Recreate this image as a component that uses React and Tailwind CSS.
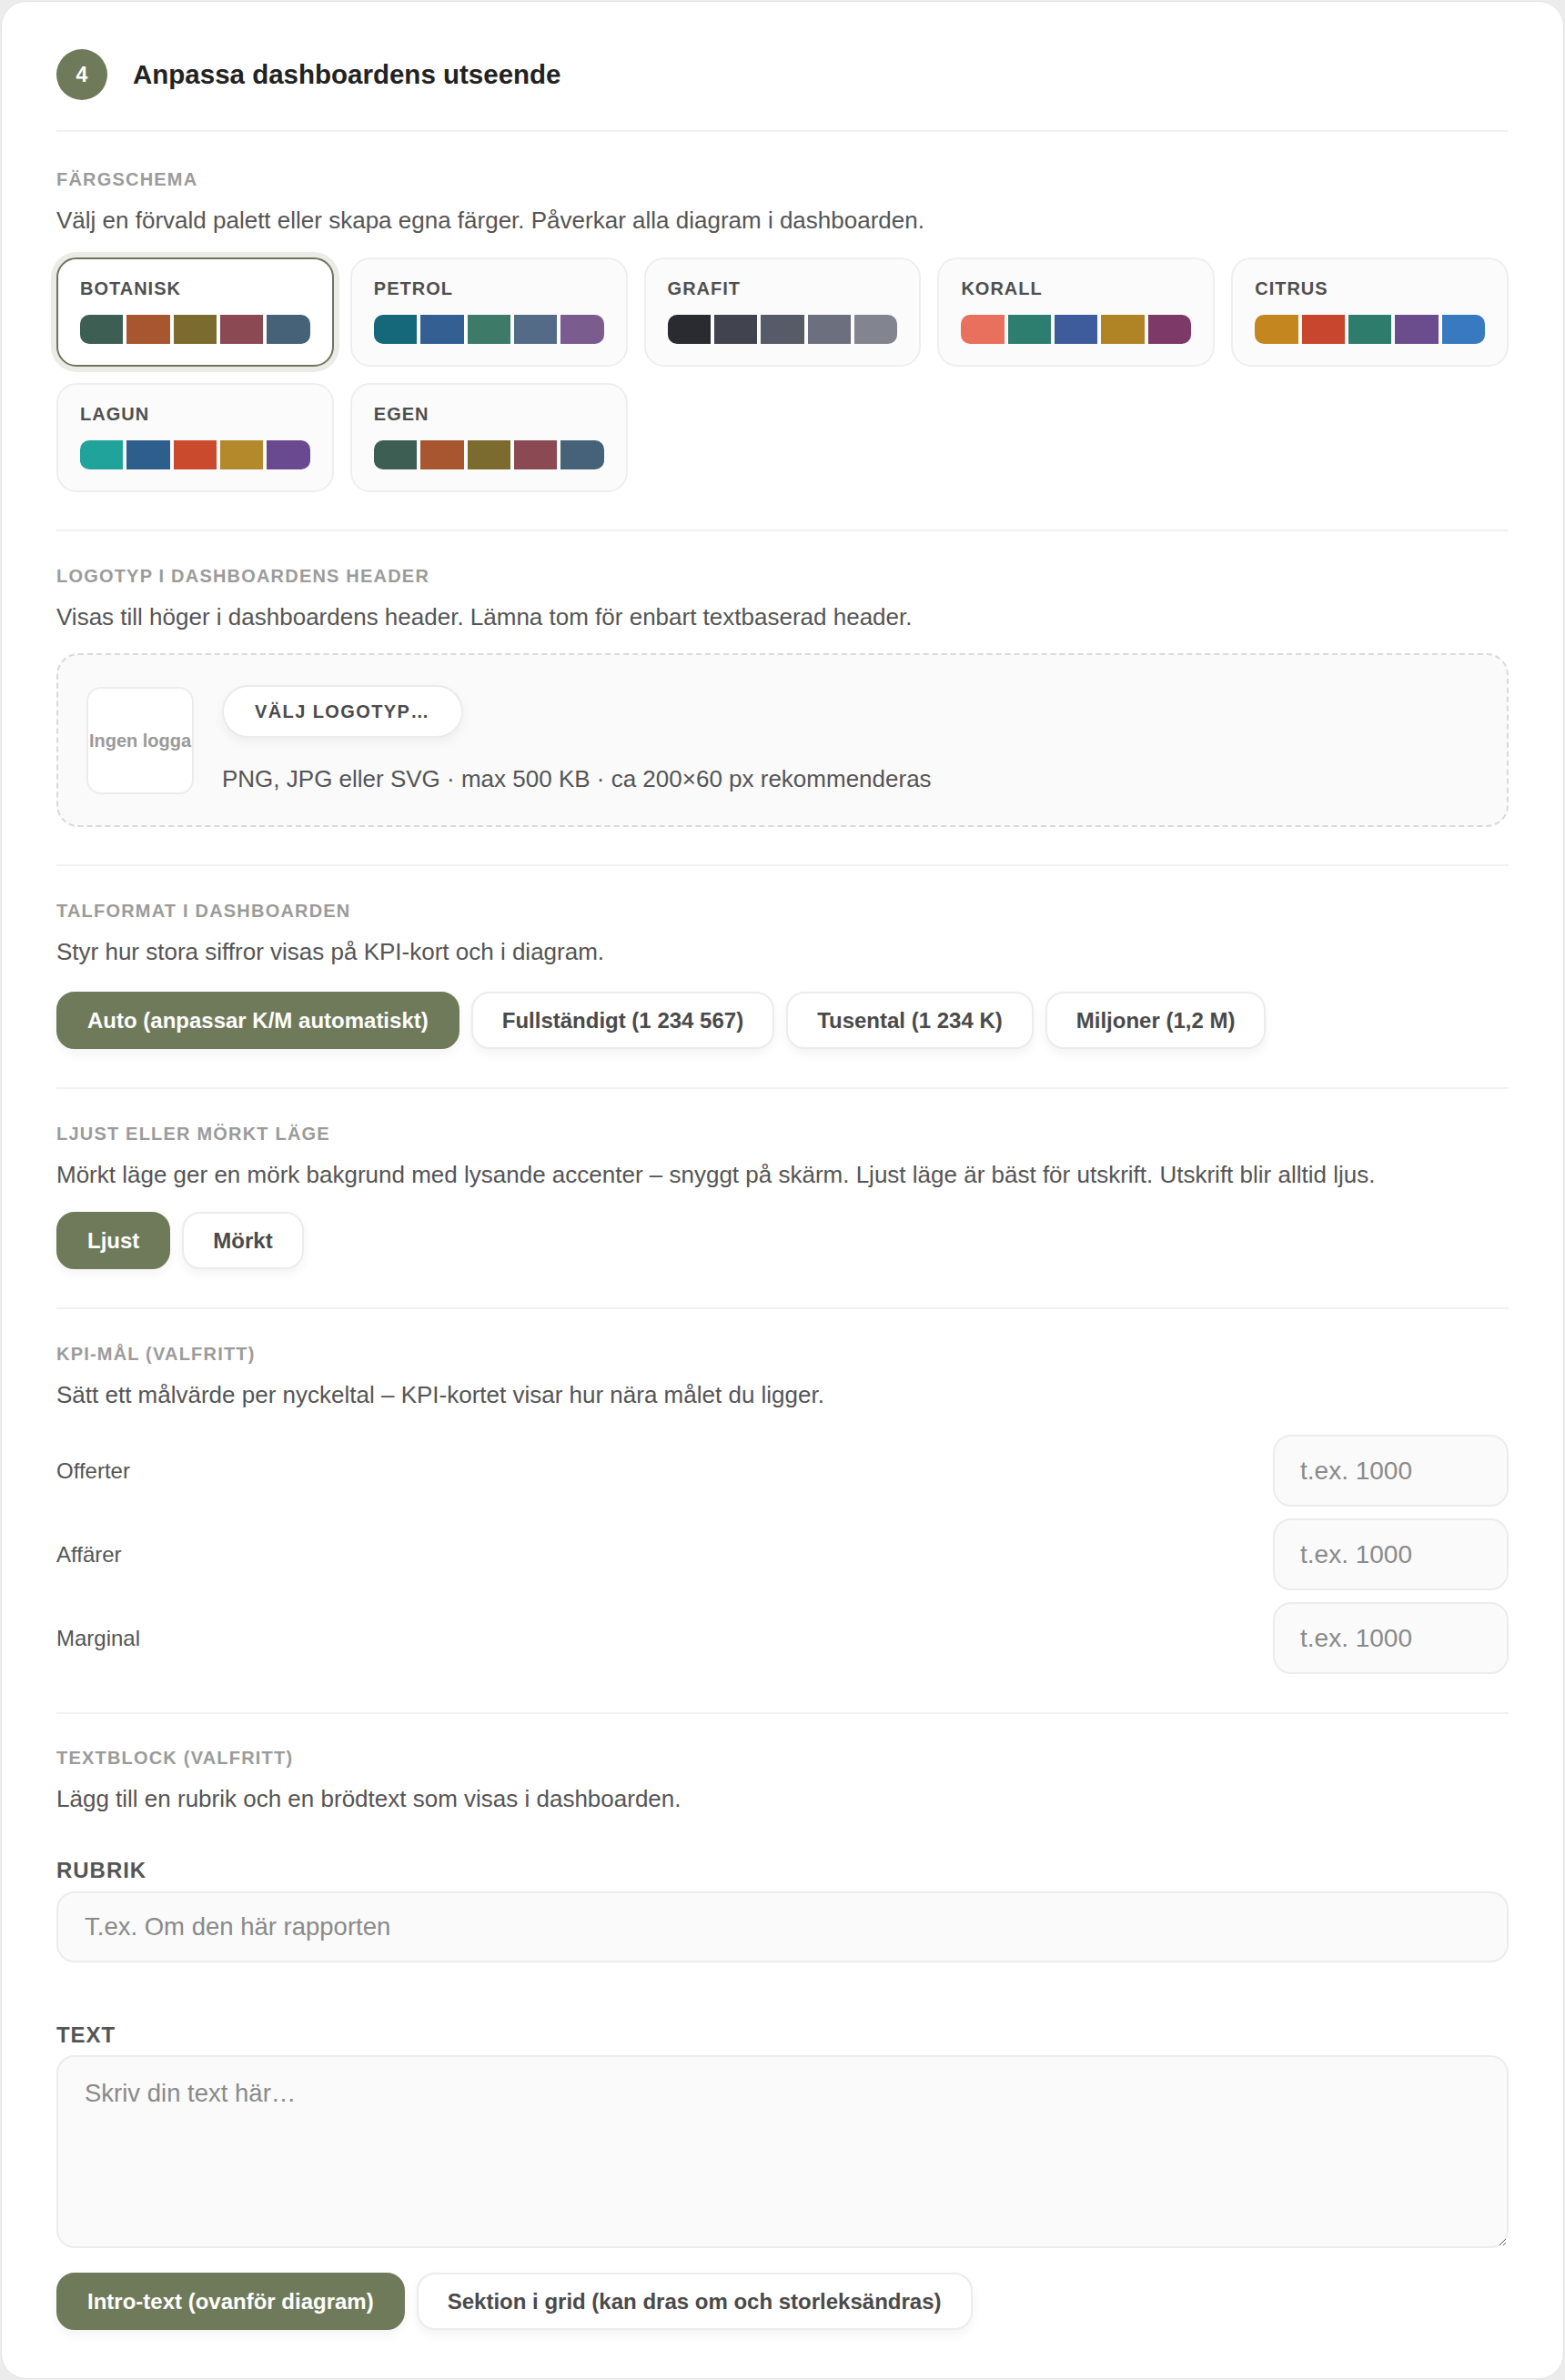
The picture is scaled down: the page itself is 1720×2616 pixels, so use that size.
import React, { useState } from "react";

const palettes = [
  { key: "botanisk", name: "BOTANISK", colors: ["#3d5e52", "#a85630", "#7b6b2e", "#8b4a53", "#466278"] },
  { key: "petrol", name: "PETROL", colors: ["#14687a", "#335f93", "#3e7a68", "#546b87", "#7b5c8e"] },
  { key: "grafit", name: "GRAFIT", colors: ["#2a2b30", "#41434e", "#575a67", "#6c6f7d", "#82858f"] },
  { key: "korall", name: "KORALL", colors: ["#e8705c", "#2d7e6e", "#3e5b9b", "#b08424", "#7d3a69"] },
  { key: "citrus", name: "CITRUS", colors: ["#c4861f", "#c9462e", "#2e7c6c", "#6b4c8c", "#377abf"] },
  { key: "lagun", name: "LAGUN", colors: ["#1fa39a", "#2e5f8c", "#c94a2d", "#b3892b", "#69498f"] },
  { key: "egen", name: "EGEN", colors: ["#3d5e52", "#a85630", "#7b6b2e", "#8b4a53", "#466278"] },
];

const numberFormats = [
  { key: "auto", label: "Auto (anpassar K/M automatiskt)" },
  { key: "full", label: "Fullständigt (1 234 567)" },
  { key: "k", label: "Tusental (1 234 K)" },
  { key: "m", label: "Miljoner (1,2 M)" },
];

const kpis = ["Offerter", "Affärer", "Marginal"];

const Section = ({ label, description, className = "", children }) => (
  <section className={`border-t-2 border-[#f1f1f1] ${className}`}>
    <h3 className="text-[20px] leading-[24px] font-bold tracking-[0.06em] text-[#9b9b9b]">
      {label}
    </h3>
    <p className="mt-[15px] text-[26px] leading-[36px] text-[#555]">
      {description}
    </p>
    {children}
  </section>
);

const Choice = ({ active, onClick, children }) => (
  <button
    onClick={onClick}
    className={`h-[63px] px-[32px] rounded-[20px] border-2 text-[24px] font-bold whitespace-nowrap shadow-[0_5px_12px_rgba(0,0,0,0.05)] ${
      active
        ? "bg-[#6f7a5a] border-[#6f7a5a] text-white"
        : "bg-white border-[#ececec] text-[#4a4a4a]"
    }`}
  >
    {children}
  </button>
);

const PaletteCard = ({ palette, active, onClick }) => (
  <button
    onClick={onClick}
    className={`text-left rounded-[22px] border-2 pt-[20px] pb-[23px] px-[24px] ${
      active
        ? "bg-white border-[#6f7459] ring-[6px] ring-[#ebece7]"
        : "bg-[#fbfbfb] border-[#eeeeee]"
    }`}
  >
    <div className="text-[20px] leading-[24px] font-bold tracking-[0.05em] text-[#4f4f4f]">
      {palette.name}
    </div>
    <div className="mt-[17px] flex gap-[4px] rounded-[10px] overflow-hidden h-[32px]">
      {palette.colors.map((c, i) => (
        <span key={i} className="flex-1" style={{ backgroundColor: c }} />
      ))}
    </div>
  </button>
);

export default function App() {
  const [palette, setPalette] = useState("botanisk");
  const [format, setFormat] = useState("auto");
  const [mode, setMode] = useState("light");
  const [placement, setPlacement] = useState("intro");

  return (
    <div className="min-h-screen bg-[#ececec] p-px font-['Liberation_Sans',Arial,sans-serif]">
      <div className="bg-white border border-[#e4e4e4] rounded-[28px] px-[60px] pt-[52px] pb-[53px]">
        {/* step header */}
        <div className="flex items-center gap-[28px] pb-[33px]">
          <div className="w-[56px] h-[56px] rounded-full bg-[#6f7a5a] text-white flex items-center justify-center text-[23px] font-bold">
            4
          </div>
          <h2 className="text-[29.5px] leading-[36px] font-bold text-[#222]">
            Anpassa dashboardens utseende
          </h2>
        </div>

        <Section
          label="FÄRGSCHEMA"
          description="Välj en förvald palett eller skapa egna färger. Påverkar alla diagram i dashboarden."
          className="pt-[40px] pb-[41px]"
        >
          <div className="mt-[23px] grid grid-cols-5 gap-[18px]">
            {palettes.map((p) => (
              <PaletteCard
                key={p.key}
                palette={p}
                active={palette === p.key}
                onClick={() => setPalette(p.key)}
              />
            ))}
          </div>
        </Section>

        <Section
          label="LOGOTYP I DASHBOARDENS HEADER"
          description="Visas till höger i dashboardens header. Lämna tom för enbart textbaserad header."
          className="pt-[37px] pb-[41px]"
        >
          <div className="mt-[22px] flex items-center gap-[31px] rounded-[24px] border-2 border-dashed border-[#d9d9d9] bg-[#fafafa] px-[31px] py-[33px]">
            <div className="w-[118px] h-[118px] shrink-0 rounded-[16px] border-2 border-[#ececec] bg-white flex items-center justify-center">
              <span className="text-[20px] font-bold text-[#9a9a9a] whitespace-nowrap">
                Ingen logga
              </span>
            </div>
            <div className="flex flex-col items-start gap-[27px]">
              <button className="h-[58px] px-[34px] rounded-full border-2 border-[#ebebeb] bg-white text-[20px] font-bold tracking-[0.07em] text-[#4a4a4a] shadow-[0_5px_12px_rgba(0,0,0,0.05)]">
                VÄLJ LOGOTYP…
              </button>
              <p className="text-[26px] leading-[36px] text-[#555]">
                PNG, JPG eller SVG · max 500 KB · ca 200×60 px rekommenderas
              </p>
            </div>
          </div>
        </Section>

        <Section
          label="TALFORMAT I DASHBOARDEN"
          description="Styr hur stora siffror visas på KPI-kort och i diagram."
          className="pt-[37px] pb-[42px]"
        >
          <div className="mt-[26px] flex gap-[13px]">
            {numberFormats.map((f) => (
              <Choice key={f.key} active={format === f.key} onClick={() => setFormat(f.key)}>
                {f.label}
              </Choice>
            ))}
          </div>
        </Section>

        <Section
          label="LJUST ELLER MÖRKT LÄGE"
          description="Mörkt läge ger en mörk bakgrund med lysande accenter – snyggt på skärm. Ljust läge är bäst för utskrift. Utskrift blir alltid ljus."
          className="pt-[37px] pb-[42px]"
        >
          <div className="mt-[23px] flex gap-[13px]">
            <Choice active={mode === "light"} onClick={() => setMode("light")}>
              Ljust
            </Choice>
            <Choice active={mode === "dark"} onClick={() => setMode("dark")}>
              Mörkt
            </Choice>
          </div>
        </Section>

        <Section
          label="KPI-MÅL (VALFRITT)"
          description="Sätt ett målvärde per nyckeltal – KPI-kortet visar hur nära målet du ligger."
          className="pt-[37px] pb-[42px]"
        >
          <div className="mt-[26px] flex flex-col gap-[13px]">
            {kpis.map((k) => (
              <div key={k} className="flex items-center justify-between">
                <label className="text-[24px] text-[#555]">{k}</label>
                <input
                  type="text"
                  placeholder="t.ex. 1000"
                  className="w-[259px] h-[79px] rounded-[20px] border-2 border-[#ececec] bg-[#fafafa] px-[28px] text-[28px] text-[#333] placeholder:text-[#8a8a8a] outline-none"
                />
              </div>
            ))}
          </div>
        </Section>

        <Section
          label="TEXTBLOCK (VALFRITT)"
          description="Lägg till en rubrik och en brödtext som visas i dashboarden."
          className="pt-[36px]"
        >
          <label className="block mt-[47px] text-[24px] leading-[28px] font-bold tracking-[0.04em] text-[#555]">
            RUBRIK
          </label>
          <input
            type="text"
            placeholder="T.ex. Om den här rapporten"
            className="mt-[9px] w-full h-[78px] rounded-[20px] border-2 border-[#ececec] bg-[#fafafa] px-[29px] text-[27.5px] text-[#333] placeholder:text-[#8a8a8a] outline-none"
          />
          <label className="block mt-[66px] text-[24px] leading-[28px] font-bold tracking-[0.04em] text-[#555]">
            TEXT
          </label>
          <textarea
            placeholder="Skriv din text här…"
            className="mt-[8px] block w-full h-[212px] rounded-[20px] border-2 border-[#ececec] bg-[#fafafa] px-[29px] py-[19px] text-[27.5px] leading-[42px] text-[#333] placeholder:text-[#8a8a8a] outline-none"
          />
          <div className="mt-[27px] flex gap-[13px]">
            <Choice active={placement === "intro"} onClick={() => setPlacement("intro")}>
              Intro-text (ovanför diagram)
            </Choice>
            <Choice active={placement === "grid"} onClick={() => setPlacement("grid")}>
              Sektion i grid (kan dras om och storleksändras)
            </Choice>
          </div>
        </Section>
      </div>
    </div>
  );
}
